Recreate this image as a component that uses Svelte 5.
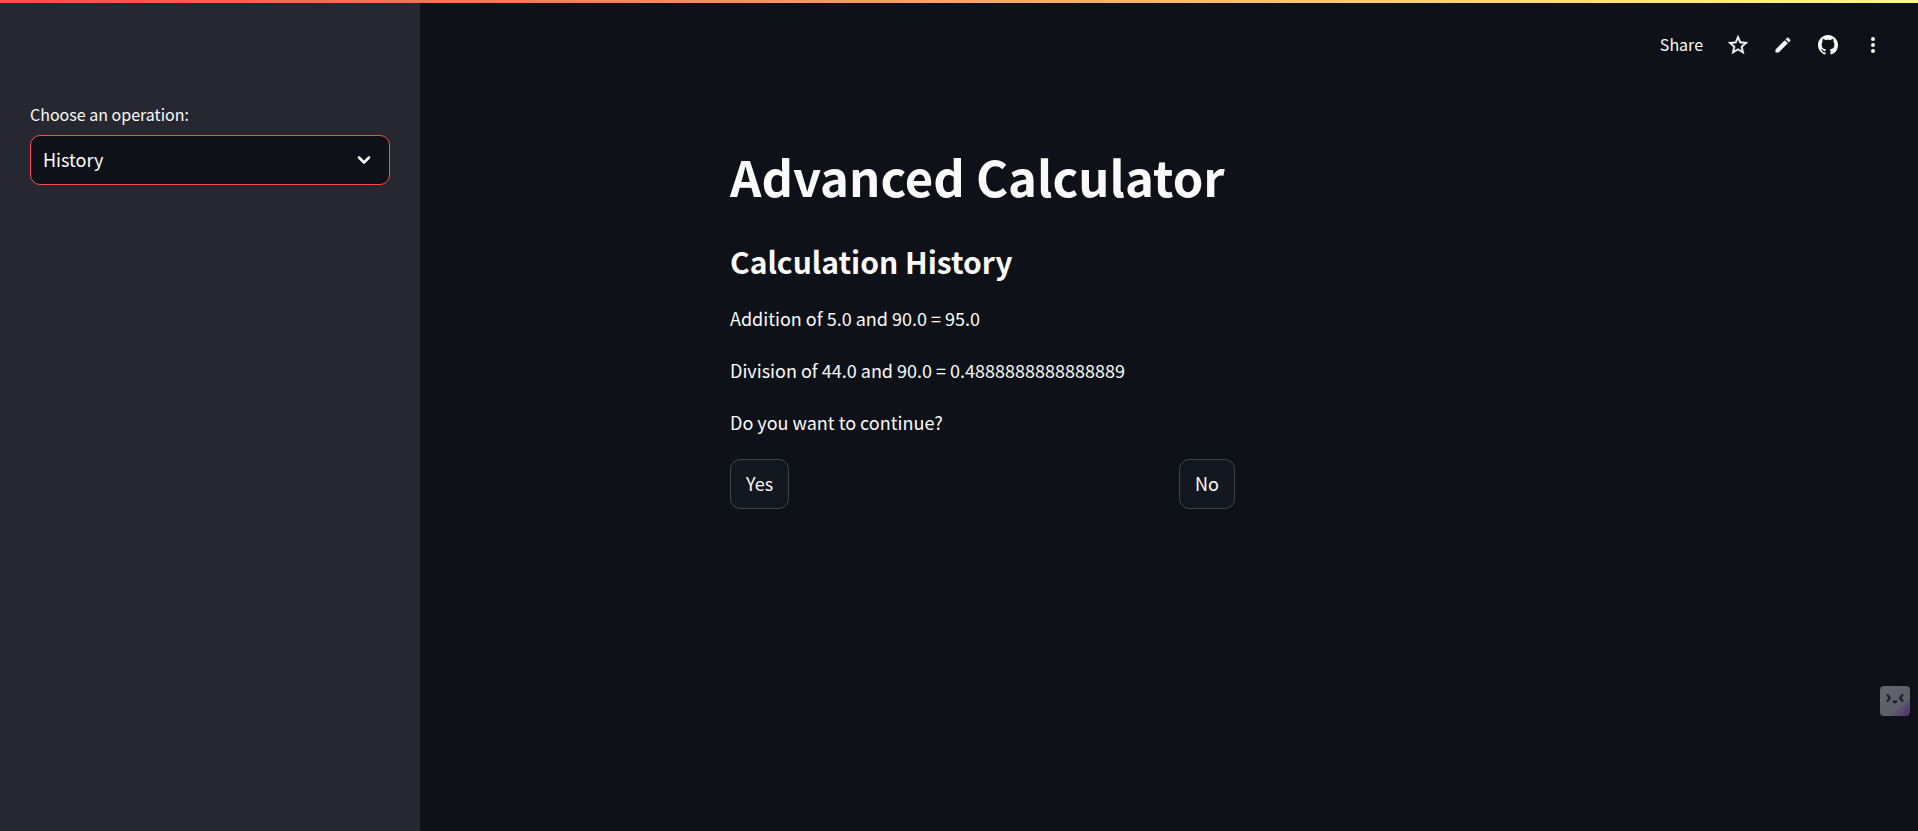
<script>
  let operation = $state('History');
  const operations = ['Addition', 'Subtraction', 'Multiplication', 'Division', 'History'];
  const history = [
    'Addition of 5.0 and 90.0 = 95.0',
    'Division of 44.0 and 90.0 = 0.4888888888888889'
  ];
</script>

<div class="app">
  <aside class="sidebar">
    <label for="operation">Choose an operation:</label>
    <div class="select">
      <select id="operation" bind:value={operation}>
        {#each operations as name}
          <option value={name}>{name}</option>
        {/each}
      </select>
      <svg class="chevron" viewBox="0 0 20 20" width="20" height="20" aria-hidden="true">
        <path d="M5 7.5l5 5 5-5" fill="none" stroke="currentColor" stroke-width="2.6" stroke-linecap="round" stroke-linejoin="round" />
      </svg>
    </div>
  </aside>

  <div class="page">
    <header class="toolbar">
      <button class="share">Share</button>
      <button class="icon" aria-label="Favorite">
        <svg viewBox="0 0 24 24" width="24" height="24">
          <path fill="currentColor" stroke="currentColor" stroke-width="0.3" d="M22 9.24l-7.19-.62L12 2 9.19 8.63 2 9.24l5.46 4.73L5.82 21 12 17.27 18.18 21l-1.63-7.03L22 9.24zM12 15.4l-3.76 2.27 1-4.28-3.32-2.88 4.38-.38L12 6.1l1.71 4.04 4.38.38-3.32 2.88 1 4.28L12 15.4z" />
        </svg>
      </button>
      <button class="icon" aria-label="Edit">
        <svg viewBox="0 0 24 24" width="20" height="20">
          <path fill="currentColor" d="M3 17.25V21h3.75L17.81 9.94l-3.75-3.75L3 17.25zM20.71 7.04a1 1 0 0 0 0-1.41l-2.34-2.34a1 1 0 0 0-1.41 0l-1.83 1.83 3.75 3.75 1.83-1.83z" />
        </svg>
      </button>
      <button class="icon" aria-label="View source">
        <svg viewBox="0 0 16 16" width="20" height="20">
          <path fill="currentColor" fill-rule="evenodd" d="M8 0C3.58 0 0 3.58 0 8c0 3.54 2.29 6.53 5.47 7.59.4.07.55-.17.55-.38 0-.19-.01-.82-.01-1.49-2.01.37-2.53-.49-2.69-.94-.09-.23-.48-.94-.82-1.13-.28-.15-.68-.52-.01-.53.63-.01 1.08.58 1.23.82.72 1.21 1.87.87 2.33.66.07-.52.28-.87.51-1.07-1.78-.2-3.64-.89-3.64-3.95 0-.87.31-1.59.82-2.15-.08-.2-.36-1.02.08-2.12 0 0 .67-.21 2.2.82.64-.18 1.32-.27 2-.27s1.36.09 2 .27c1.53-1.04 2.2-.82 2.2-.82.44 1.1.16 1.92.08 2.12.51.56.82 1.27.82 2.15 0 3.07-1.87 3.75-3.65 3.95.29.25.54.73.54 1.48 0 1.07-.01 1.93-.01 2.2 0 .21.15.46.55.38A8.01 8.01 0 0 0 16 8c0-4.42-3.58-8-8-8z" />
        </svg>
      </button>
      <button class="icon" aria-label="More options">
        <svg viewBox="0 0 24 24" width="24" height="24">
          <path fill="currentColor" d="M12 8a2 2 0 1 0 0-4 2 2 0 0 0 0 4zm0 2a2 2 0 1 0 0 4 2 2 0 0 0 0-4zm0 6a2 2 0 1 0 0 4 2 2 0 0 0 0-4z" />
        </svg>
      </button>
    </header>

    <main>
      <h1>Advanced Calculator</h1>
      <h2>Calculation History</h2>
      {#each history as entry}
        <p>{entry}</p>
      {/each}
      <p>Do you want to continue?</p>
      <div class="answers">
        <button class="answer">Yes</button>
        <button class="answer">No</button>
      </div>
    </main>
  </div>

  <div class="rainbow"></div>

  <button class="assistant" aria-label="Assistant">
    <svg viewBox="0 0 30 30" width="30" height="30">
      <defs>
        <linearGradient id="face" x1="0" y1="0" x2="1" y2="1">
          <stop offset="0" stop-color="#62646c" />
          <stop offset="0.65" stop-color="#5f5f6a" />
          <stop offset="0.85" stop-color="#54406f" />
          <stop offset="1" stop-color="#522c73" />
        </linearGradient>
      </defs>
      <rect width="30" height="30" rx="4" fill="url(#face)" />
      <path d="M7.5 9l2.5 3-2.5 3M22.5 9l-2.5 3 2.5 3" fill="none" stroke="#1c1f28" stroke-width="2" stroke-linecap="round" stroke-linejoin="round" />
      <path d="M12.5 14.4h5q-.2 2.8-2.5 2.8t-2.5-2.8z" fill="#1c1f28" />
    </svg>
  </button>
</div>

<style>
  :global(body) {
    margin: 0;
    background: #0e1117;
  }
  .app {
    display: flex;
    min-height: 100vh;
    color: #fafafa;
    background: #0e1117;
    font-family: "Noto Sans CJK SC", "Noto Sans", sans-serif;
    font-size: 18px;
    line-height: 30px;
  }
  button,
  select {
    font: inherit;
    color: inherit;
    cursor: pointer;
  }
  svg {
    display: block;
  }
  .rainbow {
    position: absolute;
    top: 0;
    left: 0;
    right: 0;
    height: 3px;
    background: linear-gradient(90deg, #ff4b4b, #fffd80);
  }
  .sidebar {
    box-sizing: border-box;
    flex: 0 0 420px;
    padding: 100px 30px 30px;
    background: #262730;
  }
  .sidebar label {
    display: block;
    margin-bottom: 7px;
    font-size: 16px;
    line-height: 28px;
  }
  .select {
    display: grid;
    align-items: center;
  }
  .select select {
    grid-area: 1 / 1;
    box-sizing: border-box;
    width: 100%;
    height: 50px;
    padding: 0 50px 2px 12px;
    appearance: none;
    background: #0e1117;
    border: 1px solid #ff4b4b;
    border-radius: 10px;
    outline: none;
  }
  .chevron {
    grid-area: 1 / 1;
    justify-self: end;
    margin-right: 16px;
    pointer-events: none;
  }
  .page {
    flex: 1;
    min-width: 0;
  }
  .toolbar {
    display: flex;
    justify-content: flex-end;
    align-items: center;
    gap: 5px;
    height: 90px;
    padding-right: 25px;
  }
  .toolbar button {
    display: flex;
    align-items: center;
    justify-content: center;
    height: 40px;
    padding: 0;
    background: none;
    border: 0;
  }
  .toolbar .share {
    padding: 0 10px 2px;
    font-size: 16px;
  }
  .toolbar .icon {
    width: 40px;
  }
  main {
    max-width: 878px;
    margin: 0 auto;
    padding: 50px 20px 0;
  }
  h1,
  h2,
  p {
    margin: 0;
  }
  h1 {
    margin-bottom: 20px;
    font-size: 49px;
    font-weight: 700;
    line-height: 72px;
  }
  h2 {
    margin-bottom: 13px;
    font-size: 30px;
    font-weight: 700;
    line-height: 58px;
  }
  p {
    margin-bottom: 22px;
  }
  .answers {
    display: grid;
    grid-template-columns: 1fr 1fr;
    gap: 20px;
    justify-items: start;
  }
  .answer {
    height: 50px;
    padding: 0 15px 2px;
    background: #131720;
    border: 1px solid #41444c;
    border-radius: 10px;
  }
  .assistant {
    position: absolute;
    right: 8px;
    top: 686px;
    padding: 0;
    background: none;
    border: 0;
  }
</style>
